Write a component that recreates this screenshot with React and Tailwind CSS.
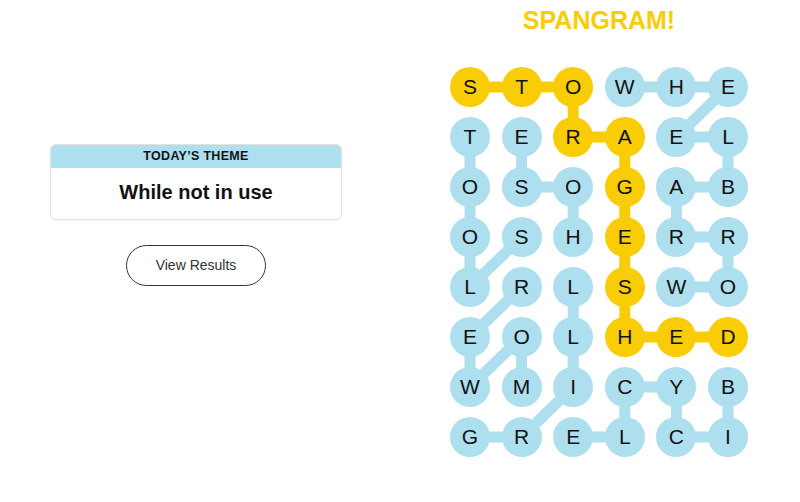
import React from "react";

const LETTERS = [
  "STOWHE",
  "TERAEL",
  "OSOGAB",
  "OSHERR",
  "LRLSWO",
  "EOLHED",
  "WMICYB",
  "GRELCI",
];

const YELLOW = [[0,0],[0,1],[0,2],[1,2],[1,3],[2,3],[3,3],[4,3],[5,3],[5,4],[5,5]];
const BLUE_PATHS = [
  [[0,3],[0,4],[0,5],[1,4],[1,5],[2,5],[2,4],[3,4],[3,5],[4,5],[4,4]],
  [[1,0],[2,0],[3,0],[4,0],[3,1]],
  [[1,1],[2,1],[2,2],[3,2]],
  [[6,1],[5,1],[6,0],[5,0],[4,1]],
  [[7,0],[7,1],[6,2],[5,2],[4,2]],
  [[6,5],[7,5],[7,4],[6,4],[6,3],[7,3],[7,2]],
];

const BLUE = "#aedfee";
const GOLD = "#f8cd05";
const DX = 51.6;
const DY = 50;

const cx = (c) => 20 + c * DX;
const cy = (r) => 20 + r * DY;

const isYellow = (r, c) => YELLOW.some(([a, b]) => a === r && b === c);

function Path({ cells, color }) {
  const pts = cells.map(([r, c]) => `${cx(c)},${cy(r)}`).join(" ");
  return (
    <polyline
      points={pts}
      fill="none"
      stroke={color}
      strokeWidth="11"
      strokeLinejoin="round"
      strokeLinecap="round"
    />
  );
}

export default function App() {
  return (
    <div
      className="w-[800px] h-[502px] bg-white flex overflow-hidden"
      style={{ fontFamily: '"Liberation Sans", Arial, sans-serif' }}
    >
      <div className="w-[392px] flex flex-col items-center pt-[144px]">
        <div className="w-[292px] h-[76px] rounded-[6px] border border-[#e2e2e2] shadow-[0_1px_2px_rgba(0,0,0,0.06)] overflow-hidden flex flex-col">
          <div className="h-[23px] bg-[#aedfee] flex items-center justify-center text-[12.5px] font-bold text-[#121212] tracking-[0.3px]">
            TODAY’S THEME
          </div>
          <div className="flex-1 flex items-center justify-center text-[20px] font-bold text-[#121212] pb-[3px]">
            While not in use
          </div>
        </div>
        <button className="mt-[25px] w-[140px] h-[41px] rounded-full border border-[#333333] bg-white text-[14px] text-[#333333] flex items-center justify-center">
          View Results
        </button>
      </div>

      <div className="ml-[58px] w-[298px] flex flex-col items-center">
        <div className="mt-[5px] h-[30px] leading-[30px] text-[25px] font-bold text-[#f8cd05]">
          SPANGRAM!
        </div>
        <div className="relative mt-[32px] w-[298px] h-[390px]">
          <svg
            className="absolute inset-0"
            width="298"
            height="390"
            viewBox="0 0 298 390"
          >
            {BLUE_PATHS.map((p, i) => (
              <Path key={i} cells={p} color={BLUE} />
            ))}
            <Path cells={YELLOW} color={GOLD} />
          </svg>
          <div className="relative grid grid-cols-[repeat(6,40px)] grid-rows-[repeat(8,40px)] gap-x-[11.6px] gap-y-[10px]">
            {LETTERS.map((row, r) =>
              row.split("").map((ch, c) => (
                <div
                  key={`${r}-${c}`}
                  className={
                    "w-[40px] h-[40px] rounded-full flex items-center justify-center text-[21px] text-[#121212] " +
                    (isYellow(r, c) ? "bg-[#f8cd05]" : "bg-[#aedfee]")
                  }
                >
                  {ch}
                </div>
              ))
            )}
          </div>
        </div>
      </div>
    </div>
  );
}
